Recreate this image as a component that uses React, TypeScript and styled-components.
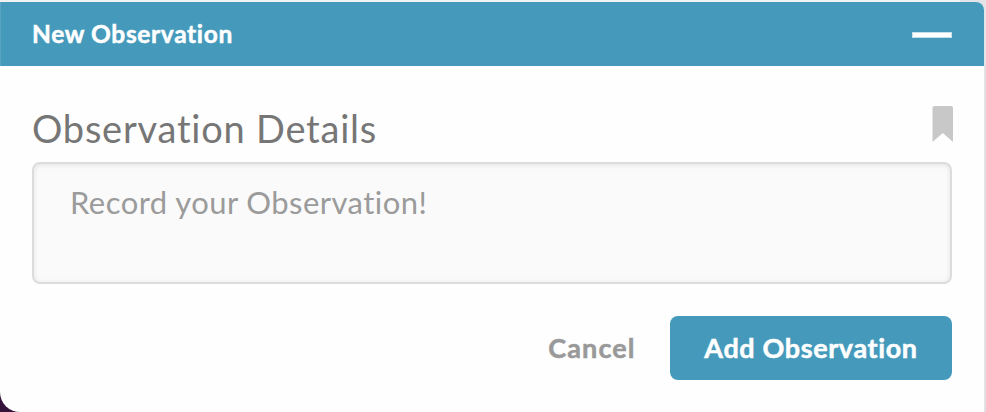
import React from "react";
import styled, { createGlobalStyle } from "styled-components";

const GlobalStyle = createGlobalStyle`
  *, *::before, *::after { box-sizing: border-box; }
  html, body { margin: 0; }
  body {
    background: linear-gradient(90deg, #f2f2f3 0 960px, #e4e4e8 960px);
    font-family: Lato, "Open Sans", sans-serif;
    font-variant-ligatures: none;
    overflow: hidden;
  }
`;

const Backdrop = styled.main`
  width: 986px;
  height: 412px;
  padding: 2px 2px 0 0;
  background:
    linear-gradient(#35143c, #35143c) left bottom / 30px 30px no-repeat,
    linear-gradient(#e1e1e3, #e1e1e3) right 64px / 2px 100% no-repeat;
`;

const Panel = styled.section`
  width: 984px;
  height: 410px;
  background: #fefefe;
  border-radius: 0 8px 0 20px;
  overflow: hidden;
`;

const Header = styled.header`
  display: flex;
  align-items: center;
  justify-content: space-between;
  height: 64px;
  padding: 0 32px;
  background: #459abc;
  box-shadow: inset 1px 0 #5aa4c3;
`;

const HeaderTitle = styled.h1`
  margin: 0;
  color: #fff;
  font-size: 24.5px;
  line-height: 32px;
  font-weight: 700;
  letter-spacing: 0.65px;
  -webkit-text-stroke: 0.5px currentColor;
`;

const Minimize = styled.button`
  width: 40px;
  height: 6px;
  margin-top: 2px;
  padding: 0;
  border: 1px solid #c4e0eb;
  background: #fff;
`;

const Form = styled.form`
  padding: 40px 32px 0;
`;

const Heading = styled.div`
  display: flex;
  justify-content: space-between;
  height: 56px;
`;

const Label = styled.label`
  margin-top: -1px;
  color: #767676;
  font-size: 38px;
  line-height: 46px;
  font-weight: 400;
  letter-spacing: 0.77px;
`;

const Bookmark = styled.svg`
  display: block;
  width: 21px;
  height: 36px;
  margin-right: -1px;
`;

const Details = styled.textarea`
  display: block;
  width: 920px;
  height: 122px;
  padding: 18px 36px;
  border: 2px solid #dcdcdc;
  border-radius: 8px;
  outline: 0;
  resize: none;
  background: #fafafa;
  box-shadow: inset 0 1px 5px rgba(0, 0, 0, 0.1);
  font-family: inherit;
  font-variant-ligatures: none;
  font-size: 31px;
  line-height: 40px;
  letter-spacing: 0.44px;
  &::placeholder { color: #9b9b9b; opacity: 1; }
`;

const Actions = styled.div`
  display: flex;
  justify-content: flex-end;
  gap: 34px;
  margin-top: 32px;
`;

const Button = styled.button<{ $primary?: boolean }>`
  width: ${(p) => (p.$primary ? "282px" : "88px")};
  height: 64px;
  padding: 0 0 1px;
  border: 0;
  border-radius: 8px;
  background: ${(p) => (p.$primary ? "#459abc" : "transparent")};
  color: ${(p) => (p.$primary ? "#fff" : "#999")};
  font-family: inherit;
  font-variant-ligatures: none;
  font-size: 27px;
  font-weight: 700;
  letter-spacing: ${(p) => (p.$primary ? "0.62px" : "1.1px")};
  -webkit-text-stroke: 0.5px currentColor;
  white-space: nowrap;
`;

export default function App() {
  return (
    <>
      <GlobalStyle />
      <Backdrop>
        <Panel>
          <Header>
            <HeaderTitle>New Observation</HeaderTitle>
            <Minimize aria-label="Minimize" />
          </Header>
          <Form>
            <Heading>
              <Label htmlFor="details">Observation Details</Label>
              <Bookmark viewBox="0 0 21 36">
                <path d="M2.5 0H19Q21 0 21 2V36L10.8 27L0.5 36V2Q0.5 0 2.5 0Z" fill="#c8c8c8" />
              </Bookmark>
            </Heading>
            <Details id="details" placeholder="Record your Observation!" />
            <Actions>
              <Button type="button">Cancel</Button>
              <Button type="button" $primary>Add Observation</Button>
            </Actions>
          </Form>
        </Panel>
      </Backdrop>
    </>
  );
}
